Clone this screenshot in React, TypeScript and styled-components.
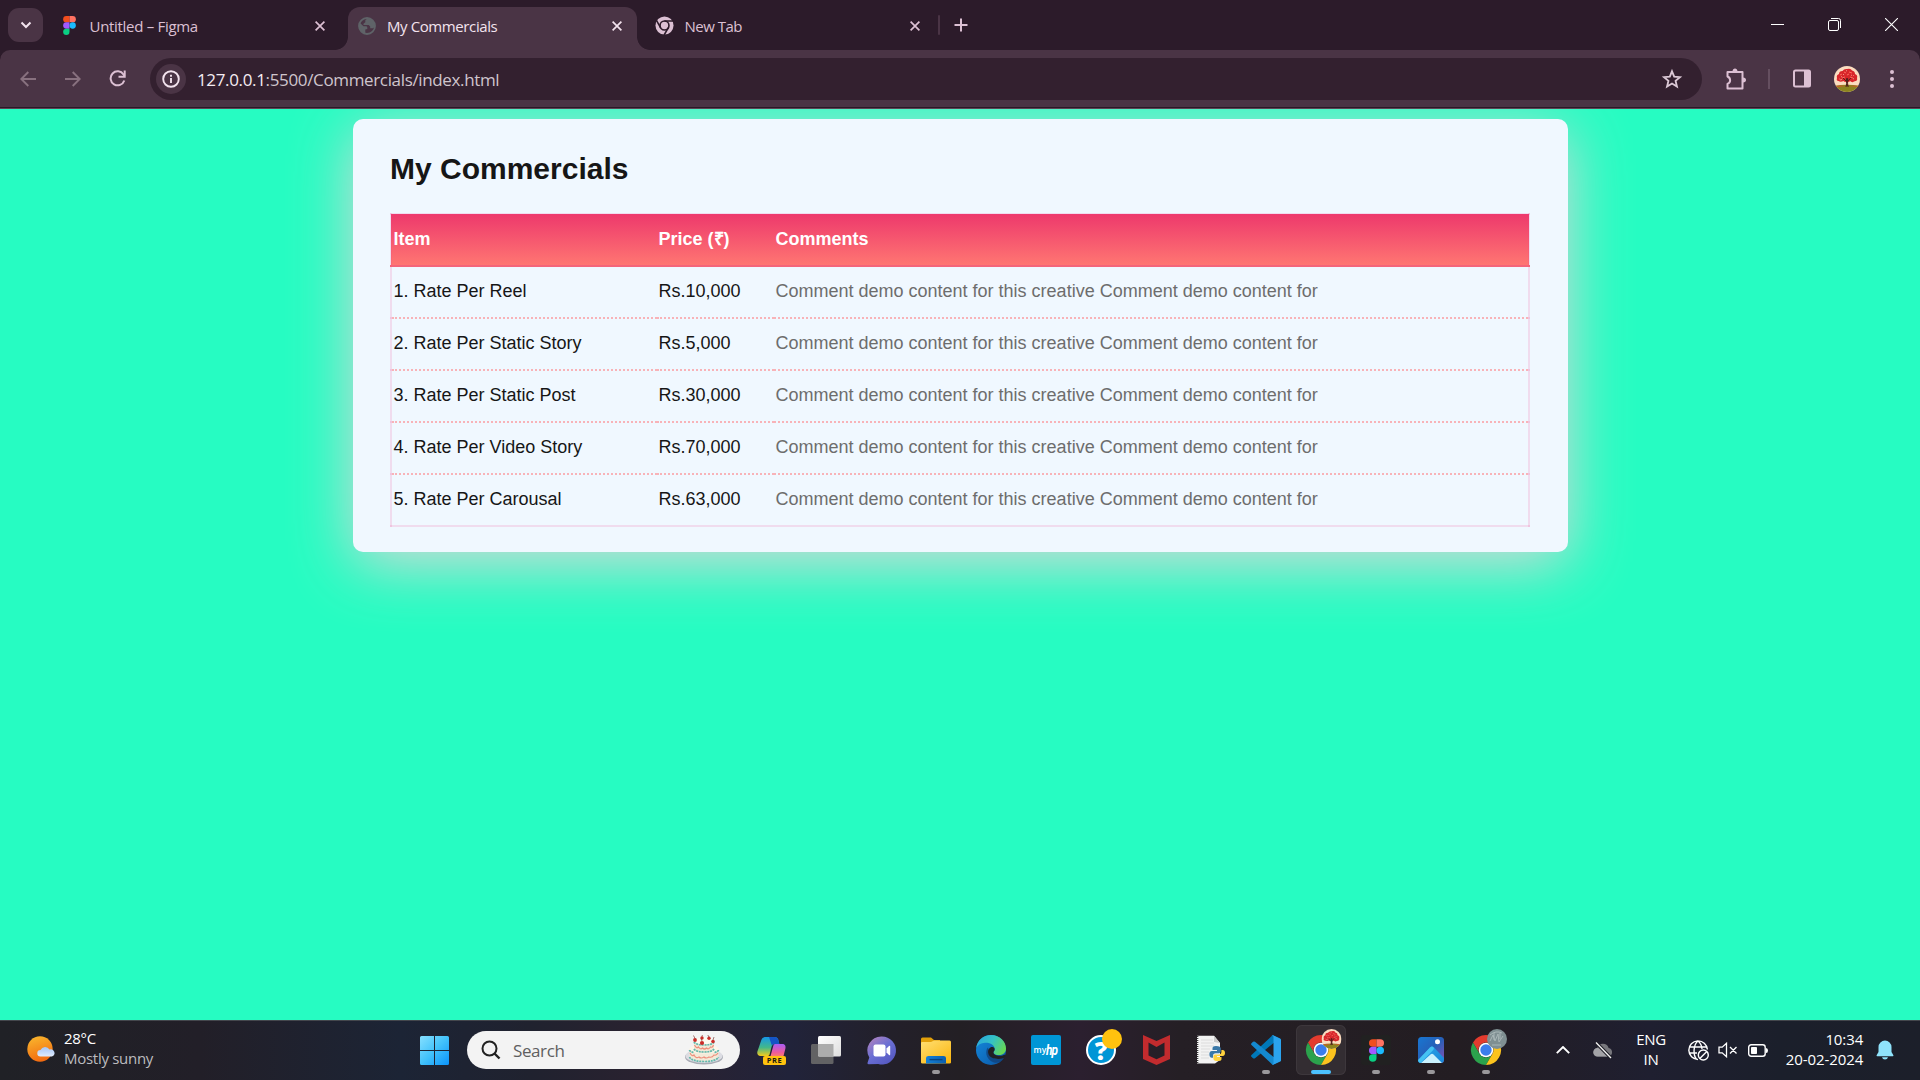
import React from "react";
import styled, { createGlobalStyle, css } from "styled-components";

const GlobalStyle = createGlobalStyle`
  * { box-sizing: border-box; }
  body { margin: 0; overflow: hidden; background: #26fcc2; }
`;

const uiFont = `"Segoe UI", "Open Sans", "Noto Sans", sans-serif`;

const Screen = styled.div`
  width: 1920px;
  height: 1080px;
  display: flex;
  flex-direction: column;
  overflow: hidden;
  font-family: ${uiFont};
`;

/* ---------- Browser chrome ---------- */

const TabStrip = styled.header`
  display: flex;
  height: 50px;
  background: #2c1b2a;
  padding-left: 8px;
  flex: none;
`;

const TabSearch = styled.button`
  width: 35px;
  height: 34px;
  margin: 8px 7.5px 0 0;
  padding: 0;
  border: 0;
  border-radius: 11px;
  background: #4a3445;
  display: grid;
  place-items: center;
`;

const Tab = styled.div<{ $active?: boolean }>`
  position: relative;
  width: 289px;
  height: 43px;
  margin: 7px 8.5px 0 0;
  padding: 0 10px 6px 9px;
  display: flex;
  align-items: center;
  gap: 10px;
  color: ${(p) => (p.$active ? "#f3e3ee" : "#dcc0d3")};
  ${(p) =>
    p.$active &&
    css`
      background: #4a3445;
      border-radius: 12px 12px 0 0;
      &::before,
      &::after {
        content: "";
        position: absolute;
        bottom: 0;
        width: 13px;
        height: 13px;
      }
      &::before {
        left: -13px;
        background: radial-gradient(circle at 0 0, transparent 12.5px, #4a3445 13.2px);
      }
      &::after {
        right: -13px;
        background: radial-gradient(circle at 100% 0, transparent 12.5px, #4a3445 13.2px);
      }
    `}
`;

const Favicon = styled.span`
  width: 20px;
  height: 20px;
  display: grid;
  place-items: center;
`;

const TabTitle = styled.span<{ $spacing: string }>`
  flex: 1;
  font-size: 15px;
  line-height: 20px;
  letter-spacing: ${(p) => p.$spacing};
  white-space: nowrap;
`;

const CloseSlot = styled.span`
  width: 20px;
  height: 20px;
  display: grid;
  place-items: center;
`;

const NewTab = styled.div`
  display: flex;
  align-items: center;
  height: 50px;
  gap: 14px;
  margin-left: -5px;
`;

const StripDivider = styled.i`
  width: 2px;
  height: 20px;
  background: #4a3445;
  border-radius: 1px;
`;

const WindowButtons = styled.div`
  display: flex;
  margin-left: auto;
  height: 49px;
  align-items: center;
`;

const WindowButton = styled.span`
  width: 57px;
  height: 48px;
  display: grid;
  place-items: center;
`;

const ToolbarBack = styled.div`
  background: #2c1b2a;
  flex: none;
`;

const Toolbar = styled.nav`
  height: 59px;
  background: #4a3445;
  border-bottom: 1px solid #5a4655;
  box-shadow: inset 0 -1px 0 #2a1927;
  border-radius: 10px 10px 0 0;
  display: flex;
  align-items: center;
  padding: 0 12px 1px 5px;
`;

const NavButton = styled.span`
  width: 45px;
  display: grid;
  place-items: center;
`;

const AddressBar = styled.div`
  width: 1552px;
  height: 42px;
  margin-left: 10px;
  flex: none;
  border-radius: 21px;
  background: #33202f;
  display: flex;
  align-items: center;
  padding: 0 19px 0 6px;
`;

const SiteInfo = styled.span`
  width: 30px;
  height: 30px;
  border-radius: 50%;
  background: #4a3445;
  display: grid;
  place-items: center;
`;

const Url = styled.span`
  flex: 1;
  margin: 2px 0 0 11px;
  font-size: 17px;
  letter-spacing: -0.35px;
  color: #cfc5cd;
  b { font-weight: 400; color: #f5ecf2; }
`;

const ToolbarActions = styled.div`
  flex: 1;
  display: flex;
  align-items: center;
  padding-left: 23px;
  svg { display: block; flex: none; }
`;

const ActionDivider = styled.i`
  width: 2px;
  height: 20px;
  margin: 0 23px 0 21px;
  background: #654f60;
`;

const PanelGroup = styled.div`
  display: flex;
  align-items: center;
  gap: 23px;
`;

const MenuDots = styled.div`
  margin-left: 17px;
`;

/* ---------- Page ---------- */

const Page = styled.main`
  height: 911px;
  flex: none;
  background: #26fcc2;
  overflow: hidden;
  padding-top: 10px;
  font-family: Arial, "Liberation Sans", sans-serif;
`;

const Card = styled.section`
  width: 1215px;
  height: 433px;
  margin: 0 auto 0 353px;
  padding: 33px 37.5px 0 37px;
  border-radius: 10px;
  background: #f0f8ff;
  box-shadow: 0 12px 62px #ddd7d8;
`;

const Heading = styled.h1`
  margin: 0 0 27px;
  font-size: 30px;
  line-height: 34px;
  color: #161616;
`;

const RateTable = styled.table`
  width: 1140px;
  table-layout: fixed;
  border-collapse: collapse;
  border: 2px solid rgba(240, 60, 140, 0.15);
  font-size: 18px;
  line-height: 21px;
`;

const HeadRow = styled.tr`
  height: 52px;
  background: linear-gradient(#ed396c, #ff7772);
`;

const BodyRow = styled.tr`
  height: 52px;
  &:not(:last-child) td { border-bottom: 2px dotted #f8b3b8; }
`;

const HeadCell = styled.th<{ $width?: number }>`
  width: ${(p) => (p.$width ? `${p.$width}px` : "auto")};
  padding: 14px 1px 0 1.5px;
  text-align: left;
  vertical-align: top;
  color: #fff;
  border-bottom: 2px solid #f4657a;
`;

const Cell = styled.td<{ $muted?: boolean }>`
  padding: 14px 1px 0 1.5px;
  vertical-align: top;
  white-space: nowrap;
  color: ${(p) => (p.$muted ? "#6d6d6d" : "#161616")};
`;

/* ---------- Taskbar ---------- */

const Taskbar = styled.footer`
  height: 60px;
  flex: none;
  display: flex;
  align-items: center;
  padding-bottom: 1px;
  border-top: 1px solid #44474d;
  background: linear-gradient(
    90deg,
    #202126 0, #221f28 200px, #1c2435 400px, #20222f 530px, #2b2230 660px, #21233a 790px,
    #23202a 890px, #231f24 960px, #2b1f2f 1080px, #251f25 1180px, #231d22 1460px,
    #1f1f30 1650px, #1b1f2b 1780px, #1c1f2a 1920px
  );
`;

const Weather = styled.div`
  width: 420px;
  display: flex;
  align-items: center;
  gap: 9px;
  padding: 0 0 2px 27px;
`;

const Lines = styled.div<{ $align?: string; $spacing?: string }>`
  display: flex;
  flex-direction: column;
  margin-bottom: 2px;
  text-align: ${(p) => p.$align || "left"};
  font-size: 15px;
  line-height: 20px;
  letter-spacing: ${(p) => p.$spacing || "-0.28px"};
  color: #fff;
  white-space: nowrap;
`;

const Dim = styled.span`
  color: #bcbcbf;
`;

const SearchBox = styled.div`
  width: 273px;
  height: 38px;
  margin: 0 3.5px 0 18px;
  border-radius: 19px;
  background: #f3f3f3;
  display: flex;
  align-items: center;
  padding: 0 17px 0 14px;
  font-size: 17px;
  letter-spacing: -0.4px;
  color: #5f5f5f;
  span { flex: 1; margin: 0 0 0 12px; }
`;

const AppSlot = styled.div<{ $mark?: "open" | "active" }>`
  position: relative;
  width: 50px;
  height: 50px;
  margin: 0 2.5px;
  display: grid;
  place-items: center;
  border-radius: 6px;
  ${(p) =>
    p.$mark === "active" &&
    css`
      background: #332d32;
      box-shadow: inset 0 0 0 1px #3d373c;
    `}
  &::after {
    content: "";
    display: ${(p) => (p.$mark ? "block" : "none")};
    position: absolute;
    bottom: 1px;
    width: ${(p) => (p.$mark === "active" ? 20 : 8)}px;
    height: 4px;
    border-radius: 2px;
    background: ${(p) => (p.$mark === "active" ? "#4cc2ff" : "#9a989b")};
  }
  svg { display: block; overflow: visible; }
`;

const Tray = styled.div`
  margin-left: auto;
  display: flex;
  align-items: center;
  padding-right: 26px;
  svg { display: block; }
`;

const TrayItem = styled.div<{ $w: number; $end?: number }>`
  width: ${(p) => p.$w}px;
  margin-right: ${(p) => p.$end || 0}px;
  display: grid;
  place-items: center;
`;

/* ---------- Icons ---------- */

const FigmaMark = ({ w, h }: { w: number; h: number }) => (
  <svg width={w} height={h} viewBox="0 0 20 30">
    <path d="M5 0h5v10H5A5 5 0 0 1 5 0Z" fill="#f24e1e" />
    <path d="M10 0h5a5 5 0 0 1 0 10h-5Z" fill="#ff7262" />
    <path d="M5 10h5v10H5a5 5 0 0 1 0-10Z" fill="#a259ff" />
    <circle cx="15" cy="15" r="5" fill="#1abcfe" />
    <path d="M5 20h5v5a5 5 0 1 1-5-5Z" fill="#0acf83" />
  </svg>
);

const CloseX = ({ color }: { color: string }) => (
  <svg width="10" height="10" viewBox="0 0 10 10" stroke={color} strokeWidth="1.7">
    <path d="M.6.6l8.800 8.800M9.400.6L.6 9.400" />
  </svg>
);

const GlobeFavicon = () => (
  <svg width="18" height="18" viewBox="0 0 18 18">
    <circle cx="9" cy="9" r="8" fill="#4a3445" stroke="#5f6368" strokeWidth="1.8" />
    <path
      d="M1.500 5.500L5.500 9.300h2.800q1 .2 1 1.200v1.600l-2 .3v3.900C3.600 16.600 1 13 1 9ZM9.500 1.200L7.300 3.200v2l-1.800 1.600v1.200h5.200l1.500 1.500v1.800h2.600l2.300-1.300C17.300 5 14 1.300 9.500 1.200Z"
      fill="#5f6368"
    />
  </svg>
);

const ChromeMono = () => (
  <svg width="19" height="19" viewBox="0 0 20 20">
    <circle cx="10" cy="10" r="9.500" fill="#dcc0d3" />
    <circle cx="10" cy="10" r="4.700" fill="none" stroke="#2c1b2a" strokeWidth="1.700" />
    <path d="M10 5.300h9M5.900 12.300L1.500 4.700M14.100 12.300L9.600 20" stroke="#2c1b2a" strokeWidth="1.700" />
  </svg>
);

const Tree = ({ size }: { size: number }) => (
  <svg width={size} height={size} viewBox="0 0 26 26">
    <defs>
      <clipPath id="avatar"><circle cx="13" cy="13" r="13" /></clipPath>
    </defs>
    <g clipPath="url(#avatar)">
      <rect width="26" height="26" fill="#fbdcc0" />
      <path d="M0 20q13-2.500 26 0v6H0Z" fill="#8c8420" />
      <path d="M0 20q7-1 12 0-6 1.500-12 1ZM15 20q6-1 11 0l-1 1q-6 0-10-1Z" fill="#c0602a" />
      <path d="M3 12q-1-3 2-4 0-3 3.500-3Q10 2.500 13 3q4-1 5 1.500 3 .5 3 3.500 3 1 2 4 1 3-3 3.500-2 1.500-4-.5-1 1.500-3 .5-2 1-3.500-.5-3 1.500-5 0Q2 15 3 12Z" fill="#d8262b" />
      <path d="M11.800 20.500q.8-1 .8-3v-5h1v5q0 2 .9 3M13 16l-4-4M13.300 15.500l4-4" stroke="#51201c" strokeWidth="1" fill="#51201c" />
      <path d="M6 9l2-1M10 6l2 1M15 6l3 1M8 12l3-1M16 11l3 1M19 9l1 1M13 9l2-1M5 13l1 0" stroke="#ff6a5c" />
      <path d="M7 10.500l1 .5M12 5l1-.5M17 9l1 .5M9 8.500h1M19 13l1-.5M6 14l2-.5" stroke="#fbc4ac" strokeWidth=".7" />
    </g>
  </svg>
);

const SunCloud = () => (
  <svg width="28" height="26" viewBox="0 0 28 26">
    <defs>
      <linearGradient id="sun" x1="0.200" y1="0" x2="0.500" y2="1">
        <stop offset="0" stopColor="#f9b62d" /><stop offset="1" stopColor="#f26a10" />
      </linearGradient>
      <linearGradient id="cloud" x1="0" y1="0" x2="0" y2="1">
        <stop offset="0" stopColor="#a5c5f8" /><stop offset="1" stopColor="#e1ebfb" />
      </linearGradient>
    </defs>
    <circle cx="13" cy="13" r="12.700" fill="url(#sun)" />
    <path d="M13.500 20.500a3.200 3.200 0 0 1 0-6.400 5 5 0 0 1 9-.6 3.600 3.600 0 0 1 2.500 7Z" fill="url(#cloud)" />
  </svg>
);

const WindowsLogo = () => (
  <svg width="29" height="29" viewBox="0 0 29 29">
    <defs>
      <linearGradient id="win" gradientUnits="userSpaceOnUse" x1="0" y1="0" x2="29" y2="29">
        <stop offset="0" stopColor="#86e0ff" /><stop offset=".5" stopColor="#42c2fb" /><stop offset="1" stopColor="#0b93fa" />
      </linearGradient>
    </defs>
    <path fill="url(#win)" d="M1.500 0H14v14H0V1.500A1.500 1.500 0 0 1 1.500 0ZM15 0h12.500A1.500 1.500 0 0 1 29 1.500V14H15ZM0 15h14v14H1.500A1.500 1.500 0 0 1 0 27.500ZM15 15h14v12.500a1.500 1.500 0 0 1-1.500 1.500H15Z" />
  </svg>
);

const Cake = () => (
  <svg width="38" height="30" viewBox="0 0 38 30">
    <ellipse cx="19" cy="22" rx="19" ry="7.500" fill="#a9abb4" />
    <ellipse cx="19" cy="21" rx="18.500" ry="7" fill="#dcdde3" />
    <path d="M4.500 14v8c2 6 27 6 29 0v-8Z" fill="#f3ead8" />
    <ellipse cx="19" cy="14" rx="14.500" ry="4.500" fill="#fdf6e9" />
    <path d="M9 6v9c2 4 18 4 20 0V6Z" fill="#f2e8d6" />
    <ellipse cx="19" cy="6" rx="10" ry="3.600" fill="#fffaf0" />
    <g fill="none" strokeWidth="1.700">
      <path d="M9 7c2 4 18 4 20 0M9 14c2 4 18 4 20 0M4.500 15c0 1 2 2 4 2.500M33.500 15c0 1-2 2-4 2.500M4.500 22c2 6 27 6 29 0" stroke="#62b9ad" strokeDasharray="2 .8" />
      <path d="M9.500 10q2 4 4 2 2 3 4 1 2 2 4 0 2 2 4-1 2 1 3-2M5 18q2 4 4 2 2 4 5 2 2 2 5 0 2 2 5 0 3 1 5-2 2 1 4-2" stroke="#ee8f7c" strokeWidth="1.200" />
    </g>
    <g fill="#c92c28">
      <circle cx="10" cy="5" r="1.900" /><circle cx="17" cy="3" r="1.700" /><circle cx="24" cy="3.300" r="1.700" />
      <circle cx="28" cy="6.500" r="1.800" /><circle cx="17" cy="8" r="2.100" />
    </g>
    <path d="M10 3.500L8.500.5M17 1.500l.5-2M24 2l-1.500-2.500M28 5l1-3M17 6l-1-2.500" stroke="#7e4038" strokeWidth=".7" />
  </svg>
);

const PreBadge = styled.b`
  position: absolute;
  left: 17px;
  top: 31px;
  width: 23px;
  height: 9px;
  border-radius: 2px;
  background: #ffc20e;
  color: #1c1a10;
  font: 700 7.500px/9px "Open Sans", sans-serif;
  letter-spacing: 0.6px;
  text-align: center;
`;

const Copilot = () => (
  <>
    <svg width="29" height="29" viewBox="0 0 29 29">
      <defs>
        <linearGradient id="cpA" x1="0" y1="0" x2="0" y2="1">
          <stop offset="0" stopColor="#1597e8" /><stop offset=".55" stopColor="#43b88a" /><stop offset="1" stopColor="#f4cb1b" />
        </linearGradient>
        <linearGradient id="cpB" x1="0" y1="0" x2="0" y2="1">
          <stop offset="0" stopColor="#a95cf5" /><stop offset=".6" stopColor="#ee5b9b" /><stop offset="1" stopColor="#ff8b58" />
        </linearGradient>
      </defs>
      <path d="M9 1h8.500c2.500 0 3.500 1.500 4 3.500L22.300 8H18c-2 0-3 1-3.500 3l-1.800 7c-.4 1.500-1 2-2.500 2H3.500C1 20-.2 18 .4 15.500L4 5C4.800 2.500 6 1 9 1Z" fill="url(#cpA)" />
      <path d="M12 1h5.500c2.500 0 3.500 1.500 4 3.500L22.300 8H18c-2 0-2.500.5-3 2Z" fill="#1554c5" />
      <path d="M18 8h7c3 0 4 2 3.400 4.500L26 22H13l3-11c.4-2 1-3 2-3Z" fill="url(#cpB)" />
    </svg>
    <PreBadge>PRE</PreBadge>
  </>
);

const TaskView = () => (
  <svg width="30" height="28" viewBox="0 0 30 28">
    <defs>
      <linearGradient id="tv" x1="0" y1="0" x2="1" y2="1">
        <stop offset="0" stopColor="#fff" /><stop offset="1" stopColor="#dedede" />
      </linearGradient>
    </defs>
    <rect y="8" width="22.500" height="20" rx="1.500" fill="#626264" />
    <rect x="7" width="23" height="20.500" rx="1.500" fill="url(#tv)" />
    <path d="M7 8h15.500v12.500H8.500A1.500 1.500 0 0 1 7 19Z" fill="#acacac" />
  </svg>
);

const Chat = () => (
  <svg width="29" height="29" viewBox="0 0 29 29">
    <defs>
      <linearGradient id="chat" x1="0.100" y1="0.100" x2=".8" y2="1">
        <stop offset="0" stopColor="#aa80c0" /><stop offset=".45" stopColor="#6a6fd4" /><stop offset="1" stopColor="#5457c0" />
      </linearGradient>
    </defs>
    <path d="M14.800.500a14 14 0 1 1-3.500 27.500L1.500 28.200Q0 28 .6 26.500L2.300 21.500A14 14 0 0 1 14.800.500Z" fill="url(#chat)" />
    <rect x="6.500" y="8.500" width="12" height="12" rx="2" fill="#fff" />
    <path d="M19.500 12.500l2.500-2.500q1.200-.6 1.200.8v7.400q0 1.400-1.200.8l-2.500-2.500Z" fill="#fff" />
  </svg>
);

const Folder = () => (
  <svg width="30" height="27" viewBox="0 0 30 27">
    <defs>
      <linearGradient id="fold" x1="0" y1="0" x2=".8" y2="1">
        <stop offset="0" stopColor="#ffdf73" /><stop offset="1" stopColor="#fbb813" />
      </linearGradient>
      <linearGradient id="foldB"><stop stopColor="#1380d8" /><stop offset="1" stopColor="#0c5fae" /></linearGradient>
    </defs>
    <path d="M0 2Q0 .5 1.500.500H10L13 3h6v6H0Z" fill="#e2a00a" />
    <path d="M0 6q0-1 1-1h9l3-1.500h15.500Q30 3.500 30 5v20.500q0 1-1.500 1h-27q-1.500 0-1.500-1Z" fill="url(#fold)" />
    <path d="M5 26.500V21q0-2 2.500-2h15q2.500 0 2.500 2v5.500Z" fill="url(#foldB)" />
    <path d="M8.500 22.600h13" stroke="#0a4480" strokeWidth="1.400" />
  </svg>
);

const Edge = () => (
  <svg width="30" height="30" viewBox="0 0 30 30">
    <defs>
      <linearGradient id="edT" x1="0" y1=".2" x2="1" y2=".6">
        <stop offset="0" stopColor="#2aa6dc" /><stop offset=".5" stopColor="#35c1c5" /><stop offset="1" stopColor="#67d653" />
      </linearGradient>
      <linearGradient id="edB" x1="0" y1="0" x2="1" y2="1">
        <stop offset="0" stopColor="#1489dd" /><stop offset="1" stopColor="#0b56a5" />
      </linearGradient>
    </defs>
    <circle cx="15" cy="15" r="15" fill="url(#edB)" />
    <path d="M.2 12.800C1.500 5 7.500 0 15 0c9 0 15 6.500 15 13.500 0 4-3 6.500-6.500 6.500-3.800 0-6-1.300-6-2.600 0-.8 1.200-1.300 1.200-3.400C18.700 10 14 7.300 9 7.700 5 8 1.500 10 .2 12.800Z" fill="url(#edT)" />
    <path d="M12 12.500C9.500 14.500 8.500 24 18 27.500c4.500 1 8-1 10-4.500-9 3-15-1-14.700-7Z" fill="#123f78" opacity=".75" />
    <path d="M17.500 17.400c0 2 3 3.300 6 3.300 2.500 0 4-.6 5-1.300l.6 1.100c.3.600-.4 2-.9 2.500-6.200 2.200-15 .7-16-5-.5-4 2-6.500 4.500-6 2 .5 2.100 2 1.900 3-.3 1-1.100 1.500-1.100 2.400Z" fill="#211f24" />
  </svg>
);

const HpTile = styled.div`
  width: 30px;
  height: 30px;
  border-radius: 2px;
  background: #0096d6;
  color: #fff;
  display: flex;
  align-items: center;
  justify-content: center;
  padding-bottom: 1px;
  font: 600 8.500px/12px "Open Sans", sans-serif;
  i { font: italic 700 14px/14px "Roboto", sans-serif; letter-spacing: -1px; transform: scaleX(.85); margin-left: -1px; }
`;

const HelpTile = styled.div`
  position: relative;
  width: 30px;
  height: 30px;
  border-radius: 50%;
  border: 2px solid #fff;
  background: #0096d6;
  color: #fff;
  font: 800 25px/26px "Open Sans", sans-serif;
  text-align: center;
  &::after {
    content: "";
    position: absolute;
    top: -8px;
    right: -8px;
    width: 20px;
    height: 20px;
    border-radius: 50%;
    background: #ffc20e;
  }
`;

const McAfee = () => (
  <svg width="27" height="30" viewBox="0 0 27 30">
    <path fillRule="evenodd" d="M0 0l13.500 6L27 0v24l-13.500 6L0 24ZM5.500 7.500v13l8 3.800 8-3.800v-13l-8 4.500Z" fill="#c22b2e" />
  </svg>
);

const PythonDoc = () => (
  <svg width="30" height="30" viewBox="0 0 30 30">
    <path d="M1 .8h17L24 8v17l-5 3.500H1Z" fill="#f2f2f2" />
    <path d="M18 .8V7l6 1Z" fill="#c9c9c9" />
    <path d="M1.700 1v27" stroke="#222" strokeWidth="1.200" strokeDasharray="1 1" />
    <path d="M5 5h12M5 8h13M5 11h13M5 14h9M5 17h8M5 20h8M5 23h8" stroke="#dcdcdc" strokeWidth="1" />
    <path d="M20 11c-3 0-3.500 1-3.500 2.500V15H21v1h-5c-2 0-2.600 1.500-2.600 3.500s.8 3.200 2.300 3.200H17v-2c0-1.500 1-2.500 2.500-2.500H23c1 0 1.800-.8 1.800-1.900V13.500c0-1.500-1.500-2.500-4.800-2.500Z" fill="#3a78a8" />
    <path d="M22 26c3 0 3.500-1 3.500-2.300V22H21v-1h5.500c2 0 2.500-1.500 2.500-3 0-2-.8-3-2.300-3h-1.300v2c0 1.500-1 2.500-2.500 2.500h-3.700c-1 0-1.800.800-1.800 1.900v2.300c0 1.500 1.500 2.300 4.600 2.300Z" fill="#ffd23e" />
  </svg>
);

const VsCode = () => (
  <svg width="30" height="30" viewBox="0 0 30 30">
    <path d="M22 .300L29 3.500Q30 4 30 5v4l-7.500-1L4 23.200q-1 .8-2 0L.5 21.800q-1-.9 0-1.800L20.500 1.200Q21.200.4 22 .3Z" fill="#0078b9" />
    <path d="M22 29.700L29 26.500Q30 26 30 25v-4l-7.500 1L4 6.800q-1-.8-2 0L.5 8.200q-1 .9 0 1.800L20.500 28.800q.7.800 1.500.9Z" fill="#1489cf" />
    <path d="M22 29.700c-.8-.1-1-.4-1.500-.9 1 .8 2 .2 2-1V2.200c0-1.200-1-1.800-2-1 .5-.5.7-.8 1.500-.9L29 3.500Q30 4 30 5v20q0 1-1 1.500Z" fill="#2ba3ee" />
  </svg>
);

const ChromeColor = ({ badge }: { badge: "tree" | "grey" }) => (
  <svg width="30" height="30" viewBox="0 0 30 30">
    <path d="M2 7.500A15 15 0 0 1 28 7.500H15a7.500 7.500 0 0 0-6.500 11.300Z" fill="#e33b2e" />
    <path d="M2 7.500A15 15 0 0 0 15 30l6.500-11.300a7.500 7.500 0 0 1-13 0Z" fill="#2ba24c" />
    <path d="M28 7.500A15 15 0 0 1 15 30l6.500-11.300A7.500 7.500 0 0 0 15 7.500Z" fill="#fcc31e" />
    <circle cx="15" cy="15" r="7.300" fill="#fff" />
    <circle cx="15" cy="15" r="5.700" fill="#3b7ded" />
    {badge === "tree" ? (
      <g transform="translate(15.500 -6)"><Tree size={20} /></g>
    ) : (
      <g>
        <circle cx="26" cy="4" r="10" fill="#7f8f92" />
        <path d="M19 0q6-5 12-2M19 6l3-6 2 6 3-7 1 8 4-6M21 10h9M23-2v7M29-2v6" stroke="#a9b6b7" strokeWidth="1" fill="none" />
      </g>
    )}
  </svg>
);

const FigmaTile = styled.div`
  width: 30px;
  height: 30px;
  border-radius: 3px;
  background: #212121;
  display: grid;
  place-items: center;
`;

const Photos = () => (
  <svg width="26" height="26" viewBox="0 0 26 26">
    <defs>
      <linearGradient id="phB" x1="0" y1="0" x2="1" y2="1">
        <stop offset="0" stopColor="#1877d2" /><stop offset=".5" stopColor="#2660b8" /><stop offset="1" stopColor="#8a4fb0" />
      </linearGradient>
      <linearGradient id="phM" x1="0" y1="0" x2="1" y2="1">
        <stop offset="0" stopColor="#2aa6ea" /><stop offset="1" stopColor="#1a86d8" />
      </linearGradient>
      <clipPath id="phC"><rect width="26" height="26" rx="3.500" /></clipPath>
    </defs>
    <g clipPath="url(#phC)">
      <rect width="26" height="26" fill="url(#phB)" />
      <path d="M0 24L12 10.500q2-2 4 0L26 21v5H0Z" fill="url(#phM)" />
      <path d="M3 26l9.500-8.500q1.500-1.300 3 0L24 26Z" fill="#c9f1fd" />
      <path d="M0 23L12 10.500q2-1.800 3.500-.2 1.200 1.500-.5 3L2.500 26H0Z" fill="#45c3f3" />
    </g>
    <circle cx="19.500" cy="4.800" r="2.500" fill="#fff" />
  </svg>
);

const rates = [
  ["1. Rate Per Reel", "Rs.10,000"],
  ["2. Rate Per Static Story", "Rs.5,000"],
  ["3. Rate Per Static Post", "Rs.30,000"],
  ["4. Rate Per Video Story", "Rs.70,000"],
  ["5. Rate Per Carousal", "Rs.63,000"],
];
const comment = "Comment demo content for this creative Comment demo content for";

export default function App() {
  return (
    <Screen>
      <GlobalStyle />
      <TabStrip>
        <TabSearch>
          <svg width="12" height="8" viewBox="0 0 12 8" fill="none" stroke="#f3e3ee" strokeWidth="2">
            <path d="M1.500 1.500L6 6l4.500-4.500" />
          </svg>
        </TabSearch>
        <Tab>
          <Favicon><FigmaMark w={13} h={19} /></Favicon>
          <TabTitle $spacing="-0.3px">Untitled – Figma</TabTitle>
          <CloseSlot><CloseX color="#dcc0d3" /></CloseSlot>
        </Tab>
        <Tab $active>
          <Favicon><GlobeFavicon /></Favicon>
          <TabTitle $spacing="-0.4px">My Commercials</TabTitle>
          <CloseSlot><CloseX color="#f3e3ee" /></CloseSlot>
        </Tab>
        <Tab>
          <Favicon><ChromeMono /></Favicon>
          <TabTitle $spacing="-0.5px">New Tab</TabTitle>
          <CloseSlot><CloseX color="#dcc0d3" /></CloseSlot>
        </Tab>
        <NewTab>
          <StripDivider />
          <svg width="14" height="14" viewBox="0 0 14 14" stroke="#dcc0d3" strokeWidth="2">
            <path d="M7 .5v13M.5 7h13" />
          </svg>
        </NewTab>
        <WindowButtons>
          <WindowButton>
            <svg width="13" height="13" viewBox="0 0 13 13"><path d="M0 6.500h13" stroke="#fff" /></svg>
          </WindowButton>
          <WindowButton>
            <svg width="13" height="13" viewBox="0 0 13 13" fill="none" stroke="#fff">
              <rect x=".5" y="2.500" width="10" height="10" rx="1.500" />
              <path d="M3 .5h7.500a2 2 0 0 1 2 2V10" />
            </svg>
          </WindowButton>
          <WindowButton>
            <svg width="13" height="13" viewBox="0 0 13 13" stroke="#fff" strokeWidth="1.100"><path d="M0 0l13 13M13 0L0 13" /></svg>
          </WindowButton>
        </WindowButtons>
      </TabStrip>

      <ToolbarBack>
        <Toolbar>
          <NavButton>
            <svg width="16" height="16" viewBox="0 0 16 16" fill="none" stroke="#88717f" strokeWidth="1.900"><path d="M16 8H1.500M8.300 1L1.300 8l7 7" /></svg>
          </NavButton>
          <NavButton>
            <svg width="16" height="16" viewBox="0 0 16 16" fill="none" stroke="#88717f" strokeWidth="1.900"><path d="M0 8h14.500M7.700 1l7 7-7 7" /></svg>
          </NavButton>
          <NavButton>
            <svg width="17" height="17" viewBox="0 0 17 17" fill="none" stroke="#dcc0d3" strokeWidth="2">
              <path d="M15.300 10.500A7 7 0 1 1 14.500 4.500L15.500 6" /><path d="M15.700.500v6.200H9.500" />
            </svg>
          </NavButton>
          <AddressBar>
            <SiteInfo>
              <svg width="18" height="18" viewBox="0 0 18 18" fill="none" stroke="#f3e3ee" strokeWidth="1.900">
                <circle cx="9" cy="9" r="7.800" /><path d="M9 8v5M9 4.800v1.900" />
              </svg>
            </SiteInfo>
            <Url><b>127.0.0.1</b>:5500/Commercials/index.html</Url>
            <svg width="22" height="22" viewBox="0 0 24 24" fill="none" stroke="#dcc9d6" strokeWidth="2" strokeLinejoin="miter">
              <path d="M12 3.600l2.400 5.900 6.300.5-4.800 4.100 1.500 6.200L12 17l-5.400 3.300 1.500-6.200L3.300 10l6.300-.5Z" />
            </svg>
          </AddressBar>
          <ToolbarActions>
            <svg width="22" height="22" viewBox="0 0 22 22" fill="none" stroke="#dcc0d3" strokeWidth="2" strokeLinejoin="round">
              <path d="M2.500 4h15v16.500h-15v-4.500c3.500-1.500 3.500-6 0-7.500Z" />
              <path d="M7.500 3.500c0-4 5-4 5 0ZM18 9.500c4 0 4 5 0 5Z" fill="#dcc0d3" stroke="none" />
            </svg>
            <ActionDivider />
            <PanelGroup>
              <svg width="18" height="19" viewBox="0 0 18 19">
                <rect x="1" y="1.500" width="16" height="16" rx="1.500" fill="none" stroke="#dcc0d3" strokeWidth="2" />
                <path d="M11 1.500h6v16h-6Z" fill="#dcc0d3" />
              </svg>
              <Tree size={26} />
            </PanelGroup>
            <MenuDots>
              <svg width="30" height="20" viewBox="0 0 30 20" fill="#dcc0d3">
                <circle cx="15" cy="3" r="2" /><circle cx="15" cy="10" r="2" /><circle cx="15" cy="17" r="2" />
              </svg>
            </MenuDots>
          </ToolbarActions>
        </Toolbar>
      </ToolbarBack>

      <Page>
        <Card>
          <Heading>My Commercials</Heading>
          <RateTable>
            <thead>
              <HeadRow>
                <HeadCell $width={266}>Item</HeadCell>
                <HeadCell $width={117}>Price (₹)</HeadCell>
                <HeadCell>Comments</HeadCell>
              </HeadRow>
            </thead>
            <tbody>
              {rates.map(([item, price]) => (
                <BodyRow key={item}>
                  <Cell>{item}</Cell>
                  <Cell>{price}</Cell>
                  <Cell $muted>{comment}</Cell>
                </BodyRow>
              ))}
            </tbody>
          </RateTable>
        </Card>
      </Page>

      <Taskbar>
        <Weather>
          <SunCloud />
          <Lines><span>28°C</span><Dim>Mostly sunny</Dim></Lines>
        </Weather>
        <WindowsLogo />
        <SearchBox>
          <svg width="20" height="20" viewBox="0 0 20 20" fill="none" stroke="#222" strokeWidth="2">
            <circle cx="8.500" cy="8.500" r="7" /><path d="M13.500 13.500l5 5" strokeWidth="2.400" />
          </svg>
          <span>Search</span>
          <Cake />
        </SearchBox>
        <AppSlot><Copilot /></AppSlot>
        <AppSlot><TaskView /></AppSlot>
        <AppSlot><Chat /></AppSlot>
        <AppSlot $mark="open"><Folder /></AppSlot>
        <AppSlot><Edge /></AppSlot>
        <AppSlot><HpTile>my<i>hp</i></HpTile></AppSlot>
        <AppSlot><HelpTile>?</HelpTile></AppSlot>
        <AppSlot><McAfee /></AppSlot>
        <AppSlot><PythonDoc /></AppSlot>
        <AppSlot $mark="open"><VsCode /></AppSlot>
        <AppSlot $mark="active"><ChromeColor badge="tree" /></AppSlot>
        <AppSlot $mark="open"><FigmaTile><FigmaMark w={15} h={23} /></FigmaTile></AppSlot>
        <AppSlot $mark="open"><Photos /></AppSlot>
        <AppSlot $mark="open"><ChromeColor badge="grey" /></AppSlot>
        <Tray>
          <TrayItem $w={40}>
            <svg width="14" height="8" viewBox="0 0 14 8" fill="none" stroke="#fff" strokeWidth="1.900"><path d="M.8 7.200L7 1l6.200 6.200" /></svg>
          </TrayItem>
          <TrayItem $w={40}>
            <svg width="20" height="17" viewBox="0 0 20 17">
              <path d="M4.500 14.500a4.300 4.300 0 0 1-.3-8.500 6 6 0 0 1 11.400-.1 4.400 4.400 0 0 1 0 8.600Z" fill="#77777c" />
              <path d="M4.500 14.500a4.300 4.300 0 0 1 0-8.600q2 0 3.500 1.600l8 7Z" fill="#a3a3a7" />
              <path d="M3 .5l15 15.500" stroke="#1f1f28" strokeWidth="3.500" /><path d="M3 .5l15 15.500" stroke="#f4f4f4" strokeWidth="1.300" />
            </svg>
          </TrayItem>
          <TrayItem $w={56}><Lines $align="center" $spacing="-0.3px"><span>ENG</span><span>IN</span></Lines></TrayItem>
          <TrayItem $w={38}>
            <svg width="21" height="21" viewBox="0 0 21 21" fill="none" stroke="#fff" strokeWidth="1.400">
              <path d="M10 19.500A9.300 9.300 0 1 1 19.400 9.500M1.300 7h17.500M1.300 13H9M8.500 19.300C5 15 5 5 10 1c2.500 2 3.800 5 4 8" />
              <circle cx="15.300" cy="15" r="5" /><path d="M11.800 18.500l7-7" />
            </svg>
          </TrayItem>
          <TrayItem $w={22}>
            <svg width="20" height="16" viewBox="0 0 20 16" fill="none" stroke="#fff" strokeWidth="1.300">
              <path d="M1 5.200h3.200L8.500 1.300v13.400l-4.300-3.900H1ZM12 5l6.500 6.500M18.500 5L12 11.500" />
            </svg>
          </TrayItem>
          <TrayItem $w={38}>
            <svg width="20" height="13" viewBox="0 0 20 13">
              <rect x=".7" y=".7" width="16.500" height="11.600" rx="2.500" fill="none" stroke="#fff" strokeWidth="1.400" />
              <rect x="3" y="3" width="6" height="7" rx=".8" fill="#fff" /><path d="M18 4q2 0 2 2.500T18 9Z" fill="#fff" />
            </svg>
          </TrayItem>
          <TrayItem $w={95} $end={4}><Lines $align="right" $spacing="-0.08px"><span>10:34</span><span>20-02-2024</span></Lines></TrayItem>
          <svg width="18" height="20" viewBox="0 0 18 20" fill="#8fe3fb">
            <path d="M9 .500a6.500 6.500 0 0 1 6.500 6.500v5l1.900 3.200q.3 1-.7 1H1.300q-1 0-.7-1L2.500 12V7A6.500 6.500 0 0 1 9 .5Z" /><path d="M6 17.200h6q-.6 2.300-3 2.300t-3-2.300Z" />
          </svg>
        </Tray>
      </Taskbar>
    </Screen>
  );
}
